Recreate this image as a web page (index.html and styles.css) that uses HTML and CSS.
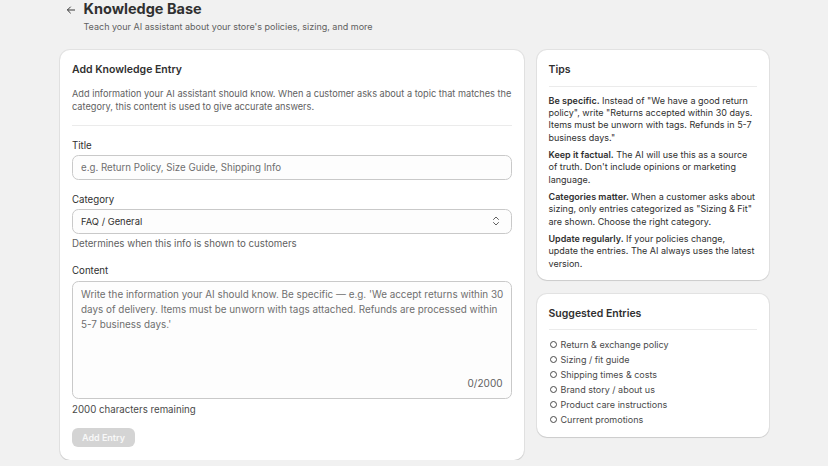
FILE: index.html
```html
<!DOCTYPE html>
<html lang="en">
<head>
  <meta charset="UTF-8">
  <meta name="viewport" content="width=device-width, initial-scale=1.0">
  <title>Knowledge Base</title>
  <link rel="stylesheet" href="styles.css">
</head>
<body>
  <div class="page">
    <div class="page-header">
      <button type="button" class="back-btn" aria-label="Back">
        <svg width="12" height="12" viewBox="0 0 20 20"><path d="M16 10H4.5M9 5l-5 5 5 5" fill="none" stroke="#303030" stroke-width="1.6" stroke-linecap="round" stroke-linejoin="round"/></svg>
      </button>
      <div>
        <h1 class="page-title">Knowledge Base</h1>
        <p class="page-subtitle">Teach your AI assistant about your store's policies, sizing, and more</p>
      </div>
    </div>

    <div class="layout">
      <div class="card main-card">
        <h2 class="card-title">Add Knowledge Entry</h2>
        <p class="card-desc">Add information your AI assistant should know. When a customer asks about a topic that matches the category, this content is used to give accurate answers.</p>
        <hr class="divider">

        <div class="field">
          <label for="Title" class="label">Title</label>
          <input type="text" id="Title" class="input" placeholder="e.g. Return Policy, Size Guide, Shipping Info">
        </div>

        <div class="field">
          <label for="Category" class="label">Category</label>
          <div class="select">
            <span>FAQ / General</span>
            <svg width="10" height="12" viewBox="0 0 10 12"><path d="M2.5 4.5L5 2l2.5 2.5M2.5 7.5L5 10l2.5-2.5" fill="none" stroke="#616161" stroke-width="1" stroke-linecap="round" stroke-linejoin="round"/></svg>
          </div>
          <p class="help">Determines when this info is shown to customers</p>
        </div>

        <div class="field">
          <label for="Content" class="label">Content</label>
          <div class="textarea-wrap">
            <textarea id="Content" class="textarea" placeholder="Write the information your AI should know. Be specific — e.g. 'We accept returns within 30 days of delivery. Items must be unworn with tags attached. Refunds are processed within 5-7 business days.'"></textarea>
            <div class="counter">0/2000</div>
          </div>
          <p class="help help-dark">2000 characters remaining</p>
        </div>

        <button type="button" class="btn-disabled" disabled>Add Entry</button>
      </div>

      <div class="side">
        <div class="card side-card">
          <h2 class="card-title">Tips</h2>
          <hr class="divider side-divider">
          <p class="tip"><b>Be specific.</b> Instead of "We have a good return policy", write "Returns accepted within 30 days. Items must be unworn with tags. Refunds in 5-7 business days."</p>
          <p class="tip"><b>Keep it factual.</b> The AI will use this as a source of truth. Don't include opinions or marketing language.</p>
          <p class="tip"><b>Categories matter.</b> When a customer asks about sizing, only entries categorized as "Sizing &amp; Fit" are shown. Choose the right category.</p>
          <p class="tip"><b>Update regularly.</b> If your policies change, update the entries. The AI always uses the latest version.</p>
        </div>

        <div class="card side-card">
          <h2 class="card-title">Suggested Entries</h2>
          <hr class="divider side-divider list-divider">
          <ul class="suggest-list">
            <li><span class="circle"></span>Return &amp; exchange policy</li>
            <li><span class="circle"></span>Sizing / fit guide</li>
            <li><span class="circle"></span>Shipping times &amp; costs</li>
            <li><span class="circle"></span>Brand story / about us</li>
            <li><span class="circle"></span>Product care instructions</li>
            <li><span class="circle"></span>Current promotions</li>
          </ul>
        </div>
      </div>
    </div>
  </div>
</body>
</html>
```

FILE: styles.css
```css
* {
  box-sizing: border-box;
}

body {
  margin: 0;
  background-color: #f1f1f1;
  font-family: Inter, "Noto Sans", sans-serif;
  color: #303030;
  font-size: 9.7px;
}

.page {
  width: 709px;
  margin: 0 auto;
}

.page-header {
  display: flex;
  align-items: flex-start;
  gap: 6px;
  margin-top: -2px;
  padding-left: 4px;
}

.back-btn {
  border: none;
  background: none;
  padding: 0;
  margin-top: 5px;
  width: 14px;
  height: 14px;
  display: flex;
  align-items: center;
  justify-content: center;
}

.page-title {
  margin: 0;
  font-size: 14.5px;
  line-height: 22px;
  font-weight: 700;
}

.page-subtitle {
  margin: 0;
  font-size: 9px;
  line-height: 14px;
  color: #616161;
}

.layout {
  display: grid;
  grid-template-columns: 1fr 232px;
  gap: 13px;
  margin-top: 16px;
  align-items: start;
}

.side {
  display: flex;
  flex-direction: column;
  gap: 14px;
}

.card {
  background-color: #fff;
  border-radius: 10px;
  padding: 13px 12px 13px;
  box-shadow: 0 0 0 1px rgba(0, 0, 0, 0.06), 0 1px 1px rgba(0, 0, 0, 0.1);
}

.main-card {
  padding: 13px 12px 13px 12.5px;
}

.side-card {
  padding-bottom: 10px;
}

.card-title {
  margin: 0;
  font-size: 10.5px;
  line-height: 14px;
  font-weight: 600;
}

.card-desc {
  margin: 10px 0 0;
  color: #616161;
  font-size: 9.2px;
  line-height: 13.4px;
}

.divider {
  border: none;
  border-top: 1px solid #ebebeb;
  margin: 11px 0 13px;
}

.side-divider {
  margin: 9px 0 8px;
}

.list-divider {
  margin: 8px 0 7px;
}

.field {
  display: flex;
  flex-direction: column;
  margin-bottom: 13px;
}

.label {
  display: block;
  line-height: 13.4px;
  margin-bottom: 3px;
}

.input,
.select {
  width: 100%;
  height: 24.5px;
  border: 1px solid #c9c9c9;
  border-radius: 6.5px;
  background-color: #fdfdfd;
  padding: 0 8px;
  font-family: inherit;
  font-size: 9.7px;
  color: #303030;
}

.input::placeholder,
.textarea::placeholder {
  color: #6f6f6f;
}

.select {
  display: flex;
  align-items: center;
  justify-content: space-between;
  padding-right: 10px;
  font-size: 9.4px;
}

.help {
  margin: 3px 0 1px;
  color: #616161;
  line-height: 13.4px;
}

.help-dark {
  color: #4a4a4a;
  margin: 4px 0 0;
}

.textarea-wrap {
  border: 1px solid #c9c9c9;
  border-radius: 6.5px;
  background-color: #fdfdfd;
  height: 118px;
  margin-top: 1px;
  display: flex;
  flex-direction: column;
  padding: 5px 6px 8px 8px;
}

.textarea {
  flex: 1;
  border: none;
  background: transparent;
  resize: none;
  padding: 0;
  font-family: inherit;
  font-size: 9.9px;
  line-height: 15px;
  color: #303030;
  outline: none;
}

.counter {
  text-align: right;
  color: #616161;
  font-size: 10px;
  line-height: 13px;
  padding-right: 2px;
}

.btn-disabled {
  display: block;
  margin-top: -2px;
  height: 19px;
  padding: 0 10px;
  border: none;
  border-radius: 6px;
  background-color: #d4d4d4;
  color: #f8f8f8;
  font-family: inherit;
  font-size: 9px;
  font-weight: 600;
}

.tip {
  margin: 0 0 5.4px;
  font-size: 9px;
  line-height: 12.2px;
}

.tip:last-child {
  margin-bottom: 0;
}

.tip b {
  font-weight: 600;
}

.suggest-list {
  list-style: none;
  margin: 0;
  padding: 0;
}

.suggest-list li {
  display: flex;
  align-items: center;
  gap: 4px;
  font-size: 9px;
  line-height: 15px;
  color: #4a4a4a;
}

.circle {
  width: 7px;
  height: 7px;
  border: 1px solid #4a4a4a;
  border-radius: 50%;
  margin-left: 1px;
}
```
